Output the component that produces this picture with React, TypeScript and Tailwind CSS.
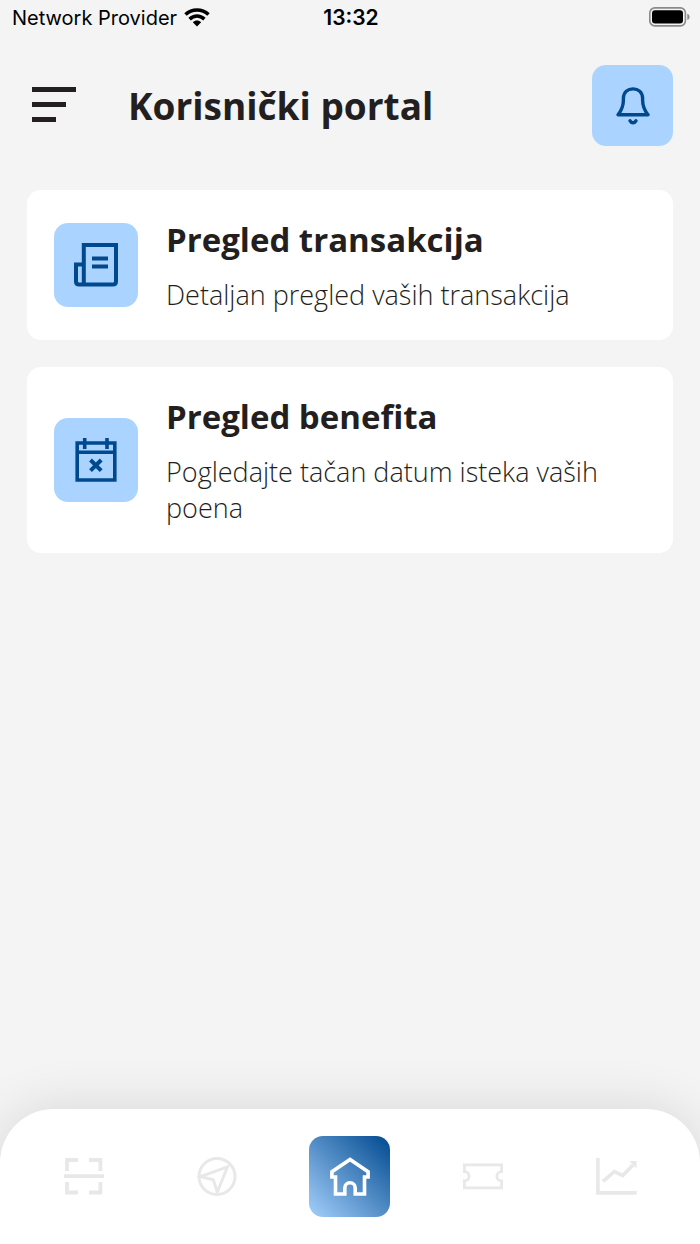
import React from "react";

const BellIcon = () => (
  <svg width="34" height="38" viewBox="0 0 34 38" fill="none" stroke="#00498f" strokeWidth="3.4" strokeLinecap="round" strokeLinejoin="round" aria-hidden="true">
    <path d="M2 27.8C5.400 23.600 7.400 19 7.400 13V11C7.800 5.200 11.600 1.900 17 1.900S26.200 5.200 26.600 11V13C26.600 19 28.600 23.600 32 27.800Z" />
    <path d="M14 33.800C15.200 36.300 18.800 36.300 20 33.800" />
  </svg>
);

const ReceiptIcon = () => (
  <svg width="44" height="44" viewBox="0 0 44 44" fill="none" stroke="#00498f" strokeWidth="4" aria-hidden="true">
    <path d="M9.800 40V2H42V38.500Q42 41.500 39 41.500H5Q2 41.500 2 38.500V21.500H9.800" />
    <path d="M18 15.600H34M18 23.600H34" />
  </svg>
);

const CalendarIcon = () => (
  <svg width="42" height="44" viewBox="0 0 42 44" fill="none" stroke="#00498f" strokeWidth="3.6" aria-hidden="true">
    <path d="M2.200 5H39.800V42H2.200ZM2.200 14.300H39.800M9.700 0V11M32 0V11" />
    <path strokeWidth="4" d="M15.500 22L26.200 32.600M26.200 22L15.500 32.600" />
  </svg>
);

const ScanIcon = () => (
  <svg width="40" height="38" viewBox="0 0 40 38" fill="none" stroke="currentColor" strokeWidth="3.8" aria-hidden="true">
    <path d="M3 13V2H14M25 2H36.400V13M3 24V34.500H14M25 34.500H36.400V24M0 18.200H40" />
  </svg>
);

const CompassIcon = () => (
  <svg width="40" height="40" viewBox="0 0 40 40" fill="none" stroke="currentColor" strokeWidth="3" aria-hidden="true">
    <circle cx="20" cy="19.500" r="18" />
    <path d="M30.500 9.800L3.500 19.500L16.300 22.800L20.300 35Z" />
  </svg>
);

const HomeIcon = () => (
  <svg width="40" height="40" viewBox="0 0 40 40" fill="none" stroke="#fff" strokeWidth="3.6" aria-hidden="true">
    <path d="M20 2.500L1.900 14.800V20H5.500V37H14.800V31A5.200 5.200 0 0 1 25.200 31V37H34.500V20H38.100V14.800Z" />
  </svg>
);

const TicketIcon = () => (
  <svg width="40" height="28" viewBox="0 0 40 28" fill="none" stroke="currentColor" strokeWidth="2.8" aria-hidden="true">
    <path d="M1.400 1.800H38.600V8.500A4.700 4.700 0 0 0 38.600 17.900V24.800H1.400V17.900A4.700 4.700 0 0 0 1.400 8.500Z" />
  </svg>
);

const ChartIcon = () => (
  <svg width="41" height="38" viewBox="0 0 41 38" fill="none" stroke="currentColor" strokeWidth="3.600" aria-hidden="true">
    <path d="M1.900 0V34.900H40.500M7 23.300L18.300 13.700L26.700 17.500L37 7" />
    <path d="M33.500 3H40.500V10.500Z" fill="currentColor" stroke="none" />
  </svg>
);

const WifiIcon = () => (
  <svg width="26" height="20" viewBox="0 0 26 20" fill="none" stroke="#000" strokeWidth="3.6" aria-hidden="true">
    <path d="M1.500 6.500C8 0.400 18 0.400 24.500 6.500M5.600 11.100C10 7 16 7 20.400 11.100" />
    <path d="M8.800 14.300C11.300 12 14.700 12 17.200 14.300L13 18.600Z" fill="#000" stroke="none" />
  </svg>
);

const BatteryIcon = () => (
  <svg width="41" height="22" viewBox="0 0 41 22" aria-hidden="true">
    <rect x="0.800" y="0.900" width="35.600" height="18" rx="5" fill="none" stroke="#8a8a8a" strokeWidth="1.600" />
    <rect x="3" y="3.200" width="31" height="13.400" rx="3" fill="#000" />
    <path d="M38.300 6.800C41.300 7.800 41.300 12 38.300 13Z" fill="#8a8a8a" />
  </svg>
);

const cards = [
  { title: "Pregled transakcija", text: "Detaljan pregled vaših transakcija", Icon: ReceiptIcon },
  { title: "Pregled benefita", text: "Pogledajte tačan datum isteka vaših poena", Icon: CalendarIcon },
];

const tabs = [
  { label: "Skeniraj", Icon: ScanIcon, active: false },
  { label: "Lokacije", Icon: CompassIcon, active: false },
  { label: "Početna", Icon: HomeIcon, active: true },
  { label: "Kuponi", Icon: TicketIcon, active: false },
  { label: "Statistika", Icon: ChartIcon, active: false },
];

export default function App() {
  return (
    <div className="flex min-h-screen flex-col overflow-x-hidden bg-[#f4f4f4] font-['Open_Sans','Noto_Sans',sans-serif] text-[#231f20]">
      <div className="grid h-9 grid-cols-[1fr_auto_1fr] items-center pr-[10px] pl-3 font-['Inter',sans-serif] text-[20px] text-black">
        <div className="flex items-center gap-[7px]">
          <span>Network Provider</span>
          <WifiIcon />
        </div>
        <span className="text-[21px] font-semibold">13:32</span>
        <div className="flex justify-end">
          <BatteryIcon />
        </div>
      </div>

      <header className="flex items-center px-[27px] pt-[29px]">
        <button type="button" aria-label="Meni" className="flex flex-col gap-[10px] pb-[2px] pl-[5px]">
          <span className="h-[5px] w-11 bg-[#231f20]" />
          <span className="h-[5px] w-[34px] bg-[#231f20]" />
          <span className="h-[5px] w-6 bg-[#231f20]" />
        </button>
        <h1 className="ml-[52px] flex-1 text-[37px] leading-[48px] font-bold">Korisnički portal</h1>
        <button type="button" aria-label="Obaveštenja" className="flex size-[81px] items-center justify-center rounded-[14px] bg-[#aad4ff]">
          <BellIcon />
        </button>
      </header>

      <main className="flex flex-1 flex-col gap-[27px] px-[27px] pt-11 pb-[27px]">
        {cards.map(({ title, text, Icon }) => (
          <a key={title} href="#" className="flex items-center gap-7 rounded-[14px] bg-white p-[27px]">
            <span className="flex size-[84px] shrink-0 items-center justify-center rounded-[14px] bg-[#aad4ff]">
              <Icon />
            </span>
            <span className="flex flex-col gap-[14px]">
              <span className="text-[33px] leading-[46px] font-bold">{title}</span>
              <span className="text-[27px] leading-9 font-light">{text}</span>
            </span>
          </a>
        ))}
      </main>

      <nav className="grid h-[135px] grid-cols-5 items-center rounded-t-[54px] bg-white px-[17px] text-[#e8e8e8] shadow-[0_0_54px_rgba(0,0,0,0.12)]">
        {tabs.map(({ label, Icon, active }) => (
          <a
            key={label}
            href="#"
            aria-label={label}
            aria-current={active ? "page" : undefined}
            className={
              active
                ? "flex size-[81px] items-center justify-center justify-self-center rounded-[14px] bg-[linear-gradient(to_top_right,#a4d0fc,#00498f)]"
                : "flex size-[81px] items-center justify-center justify-self-center"
            }
          >
            <Icon />
          </a>
        ))}
      </nav>
    </div>
  );
}
